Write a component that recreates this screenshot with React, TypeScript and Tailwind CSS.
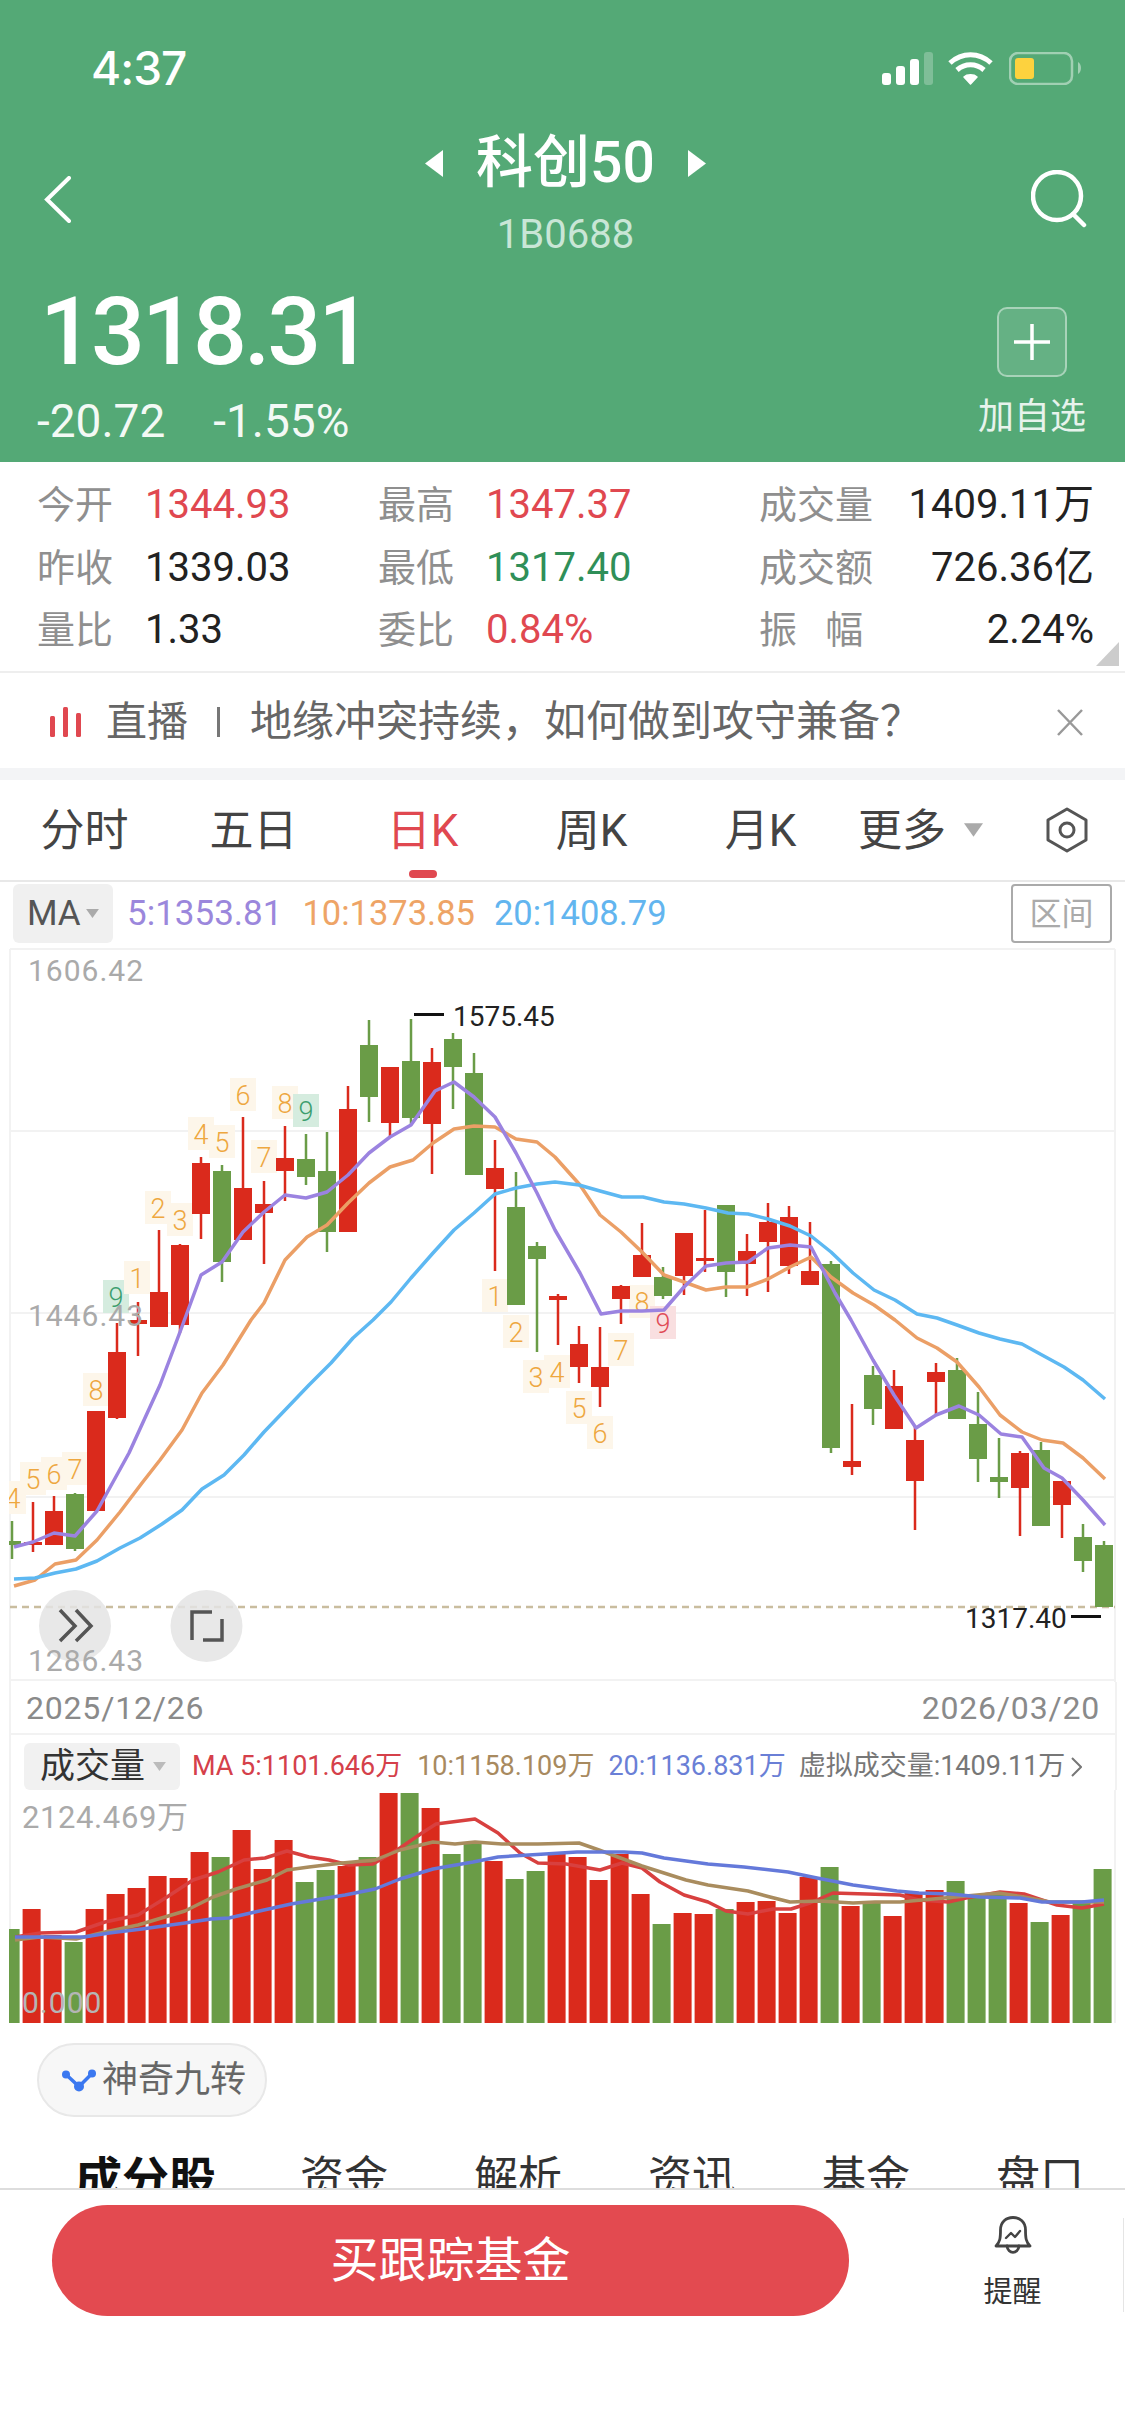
import React from "react";

const FONT = "font-['Roboto','Noto_Sans_CJK_SC',sans-serif]";

const RED = "#da2a1c";
const GREEN = "#6a9c47";

// top, body top, body bottom, low, colour
const candles: [number, number, number, number, "r" | "g"][] = [
	[1521, 1541, 1545, 1559, "g"],
	[1502, 1542, 1545, 1552, "r"],
	[1496, 1511, 1545, 1545, "r"],
	[1493, 1494, 1549, 1551, "g"],
	[1411, 1411, 1511, 1511, "r"],
	[1323, 1352, 1418, 1419, "r"],
	[1302, 1320, 1324, 1356, "r"],
	[1230, 1292, 1327, 1327, "r"],
	[1244, 1245, 1325, 1333, "r"],
	[1157, 1163, 1214, 1239, "r"],
	[1165, 1171, 1262, 1282, "g"],
	[1117, 1188, 1240, 1240, "r"],
	[1181, 1204, 1213, 1264, "r"],
	[1126, 1158, 1171, 1201, "r"],
	[1134, 1159, 1177, 1185, "g"],
	[1132, 1171, 1232, 1252, "g"],
	[1086, 1109, 1232, 1232, "r"],
	[1020, 1045, 1097, 1122, "g"],
	[1067, 1067, 1123, 1137, "r"],
	[1019, 1061, 1118, 1125, "g"],
	[1048, 1062, 1124, 1174, "r"],
	[1033, 1039, 1067, 1109, "g"],
	[1053, 1073, 1175, 1175, "g"],
	[1140, 1168, 1189, 1271, "r"],
	[1172, 1207, 1305, 1305, "g"],
	[1242, 1246, 1259, 1352, "g"],
	[1294, 1296, 1300, 1345, "r"],
	[1326, 1344, 1367, 1383, "r"],
	[1327, 1367, 1387, 1407, "r"],
	[1285, 1286, 1299, 1324, "r"],
	[1223, 1255, 1277, 1277, "r"],
	[1267, 1277, 1296, 1299, "g"],
	[1233, 1233, 1276, 1295, "r"],
	[1210, 1258, 1261, 1272, "r"],
	[1205, 1205, 1272, 1297, "g"],
	[1234, 1251, 1264, 1296, "r"],
	[1203, 1222, 1242, 1292, "r"],
	[1206, 1217, 1266, 1274, "r"],
	[1222, 1271, 1285, 1285, "r"],
	[1261, 1264, 1448, 1453, "g"],
	[1404, 1461, 1467, 1475, "r"],
	[1366, 1375, 1409, 1425, "g"],
	[1370, 1386, 1429, 1429, "r"],
	[1427, 1440, 1481, 1530, "r"],
	[1363, 1372, 1382, 1414, "r"],
	[1358, 1370, 1419, 1419, "g"],
	[1392, 1424, 1459, 1482, "g"],
	[1438, 1477, 1482, 1498, "g"],
	[1451, 1453, 1488, 1536, "r"],
	[1442, 1450, 1526, 1526, "g"],
	[1481, 1481, 1505, 1538, "r"],
	[1524, 1537, 1561, 1572, "g"],
	[1541, 1545, 1607, 1607, "g"],
];

const ma5 =
	"14,1547 33,1542 54,1533 75,1536 97,1511 129,1453 160,1385 180,1332 201,1275 222,1262 243,1232 264,1212 285,1195 306,1198 327,1192 348,1175 369,1153 390,1137 411,1125 435,1091 454,1082 474,1097 495,1117 516,1153 537,1193 555,1230 580,1273 601,1314 621,1311 642,1311 664,1310 684,1287 706,1266 726,1263 748,1262 768,1248 790,1245 811,1247 835,1293 851,1320 873,1360 894,1395 916,1428 936,1415 959,1406 979,1415 1001,1434 1022,1437 1044,1468 1062,1478 1083,1500 1105,1525";
const ma10 =
	"14,1586 35,1580 55,1564 76,1560 97,1540 120,1512 142,1483 160,1460 182,1430 202,1393 223,1365 251,1320 264,1303 285,1260 307,1237 327,1225 348,1203 369,1183 390,1167 413,1160 433,1143 454,1129 474,1126 495,1127 516,1139 537,1142 555,1157 580,1185 600,1215 621,1232 642,1252 664,1275 684,1282 706,1290 726,1287 747,1287 768,1279 790,1267 811,1257 831,1277 853,1293 874,1305 895,1320 917,1338 937,1348 957,1362 979,1387 1000,1415 1022,1432 1042,1440 1063,1443 1083,1458 1105,1479";
const ma20 =
	"14,1579 35,1578 55,1573 76,1569 97,1561 120,1548 140,1538 162,1524 182,1510 202,1489 224,1475 244,1455 264,1432 287,1408 309,1385 331,1363 353,1338 373,1320 391,1302 411,1278 433,1253 454,1230 474,1213 495,1194 516,1188 537,1184 555,1182 579,1185 600,1191 622,1197 643,1197 664,1202 684,1204 706,1208 728,1213 748,1214 768,1219 790,1226 811,1236 831,1252 853,1273 874,1290 895,1300 917,1314 937,1318 957,1325 979,1333 1000,1339 1022,1344 1042,1355 1064,1367 1083,1380 1105,1399";

// digit, x, y, tone
const nineTurn: [string, number, number, "o" | "g" | "r"][] = [
	["4", 13, 1498, "o"],
	["5", 33, 1479, "o"],
	["6", 54, 1474, "o"],
	["7", 75, 1469, "o"],
	["8", 96, 1390, "o"],
	["9", 116, 1297, "g"],
	["1", 137, 1278, "o"],
	["2", 158, 1208, "o"],
	["3", 180, 1220, "o"],
	["4", 201, 1134, "o"],
	["5", 222, 1142, "o"],
	["6", 243, 1095, "o"],
	["7", 264, 1157, "o"],
	["8", 285, 1103, "o"],
	["9", 306, 1111, "g"],
	["1", 495, 1296, "o"],
	["2", 516, 1332, "o"],
	["3", 536, 1377, "o"],
	["4", 557, 1372, "o"],
	["5", 579, 1408, "o"],
	["6", 600, 1433, "o"],
	["7", 621, 1350, "o"],
	["8", 642, 1302, "o"],
	["9", 663, 1323, "r"],
];

const toneBox = { o: "#fdf6ea", g: "#d5ecdf", r: "#f9dfe0" };
const toneText = { o: "#eea73f", g: "#3c9e6e", r: "#e04b56" };

const volumes: [number, "r" | "g"][] = [
	[1929, "g"], [1909, "r"], [1935, "r"], [1942, "g"], [1909, "r"], [1894, "r"], [1888, "r"], [1876, "r"],
	[1878, "r"], [1852, "r"], [1857, "g"], [1830, "r"], [1869, "r"], [1840, "r"], [1882, "g"], [1870, "g"],
	[1866, "r"], [1857, "g"], [1793, "r"], [1793, "g"], [1808, "r"], [1854, "g"], [1844, "g"], [1861, "r"],
	[1879, "g"], [1871, "g"], [1854, "r"], [1857, "r"], [1880, "r"], [1854, "r"], [1894, "r"], [1924, "g"],
	[1913, "r"], [1914, "r"], [1909, "g"], [1902, "r"], [1901, "r"], [1913, "r"], [1877, "r"], [1867, "g"],
	[1906, "r"], [1902, "g"], [1916, "r"], [1893, "r"], [1890, "r"], [1881, "g"], [1897, "g"], [1893, "g"],
	[1903, "r"], [1922, "g"], [1915, "r"], [1903, "g"], [1869, "g"],
];

const volRed =
	"15,1937 40,1933 76,1932 105,1922 138,1915 167,1897 193,1880 218,1872 244,1860 265,1858 287,1851 309,1857 329,1860 349,1865 373,1864 400,1848 422,1833 436,1824 475,1819 498,1833 520,1853 538,1863 566,1864 600,1870 622,1863 642,1868 660,1882 684,1895 708,1902 726,1911 748,1914 773,1909 791,1909 810,1903 833,1893 900,1895 919,1900 948,1902 966,1898 1000,1892 1024,1894 1057,1905 1082,1908 1104,1904";
const volTan =
	"15,1940 40,1937 76,1939 105,1932 138,1925 185,1911 213,1897 236,1889 267,1880 287,1870 309,1867 342,1863 375,1860 400,1850 433,1842 455,1844 475,1842 502,1844 538,1844 579,1843 599,1850 642,1866 686,1880 708,1885 748,1891 770,1897 790,1902 820,1901 853,1903 875,1902 900,1902 955,1897 999,1893 1024,1897 1050,1902 1104,1902";
const volBlue =
	"15,1937 84,1937 109,1933 142,1929 185,1923 211,1919 229,1918 255,1912 291,1904 345,1895 375,1889 400,1879 433,1869 473,1862 498,1857 545,1854 577,1852 624,1852 642,1853 664,1858 686,1861 708,1864 744,1867 788,1872 817,1878 853,1885 897,1891 919,1893 951,1894 980,1897 1020,1898 1042,1902 1082,1902 1104,1900";

function Triangle({ className, fill }: { className: string; fill: string }) {
	return (
		<svg viewBox="0 0 20 14" className={className}>
			<polygon points="0,0 20,0 10,14" fill={fill} />
		</svg>
	);
}

function StatusBar() {
	return (
		<div className="flex h-[110px] items-center justify-between pt-[26px] pl-[91px] pr-[43px]">
			<span className="text-[46px] leading-none font-['Inter',sans-serif] font-medium tracking-[-1px]">4:37</span>
			<div className="flex items-center">
				<svg width="51" height="33" viewBox="0 0 51 33" fill="white">
					<rect x="0" y="21" width="9" height="12" rx="3" />
					<rect x="14" y="14" width="9" height="19" rx="3" />
					<rect x="28" y="7" width="9" height="26" rx="3" />
					<rect x="42" y="0" width="9" height="33" rx="3" opacity="0.25" />
				</svg>
				<svg width="45" height="33" viewBox="0 0 45 33" fill="none" stroke="white" strokeWidth="5" className="ml-[15px]">
					<path d="M2 11 C14 0 31 0 43 11" />
					<path d="M9 18 C17 11 28 11 36 18" />
					<path d="M16 25 C19 22 26 22 29 25 L22.5 32 Z" fill="white" strokeWidth="1.5" strokeLinejoin="round" />
				</svg>
				<svg width="73" height="33" viewBox="0 0 73 33" className="ml-[16px]">
					<rect x="1" y="1" width="62" height="31" rx="8" fill="none" stroke="#ffffff" strokeOpacity="0.45" strokeWidth="2.5" />
					<rect x="6" y="6" width="19" height="21" rx="3" fill="#fdd23e" />
					<path d="M69 10 C73 12 73 20 69 22 Z" fill="#ffffff" fillOpacity="0.45" />
				</svg>
			</div>
		</div>
	);
}

function Header() {
	return (
		<header className="h-[462px] bg-[#54a976] text-white">
			<StatusBar />
			<div className="grid h-[148px] grid-cols-[1fr_auto_1fr] pl-[44px] pr-[38px]">
				<svg width="27" height="47" viewBox="0 0 27 47" fill="none" stroke="white" strokeWidth="4" strokeLinecap="round" className="mt-[30px] self-center">
					<path d="M25 2 L3 23.5 L25 45" />
				</svg>
				<div className="flex flex-col items-center">
					<div className="flex h-[106px] items-center gap-[33px]">
						<svg width="18" height="27" viewBox="0 0 18 27" fill="white">
							<polygon points="18,0 18,27 0,13.5" />
						</svg>
						<span className="text-[57px] font-medium">科创50</span>
						<svg width="18" height="27" viewBox="0 0 18 27" fill="white">
							<polygon points="0,0 0,27 18,13.5" />
						</svg>
					</div>
					<div className="h-[38px] text-[40px] leading-[38px] text-[#c9e6d6]">1B0688</div>
				</div>
				<svg width="56" height="58" viewBox="0 0 56 58" fill="none" stroke="white" strokeWidth="4.5" strokeLinecap="round" className="mt-[30px] self-center justify-self-end">
					<circle cx="26" cy="26" r="24" />
					<path d="M42 44 L53 55" />
				</svg>
			</div>
			<div className="flex justify-between pl-[40px] pr-[40px]">
				<div>
					<div className="flex h-[146px] items-center text-[95px] font-medium tracking-[-3px] leading-none">1318.31</div>
					<div className="-ml-[3px] flex h-[34px] items-center gap-[48px] text-[46px] leading-none text-[#f3f9f5]">
						<span>-20.72</span>
						<span>-1.55%</span>
					</div>
				</div>
				<div className="flex w-[106px] flex-col items-center pt-[49px]">
					<div className="flex h-[70px] w-[70px] items-center justify-center rounded-[10px] border-2 border-[#ffffff70] bg-[#ffffff1a]">
						<svg width="36" height="36" viewBox="0 0 36 36" stroke="white" strokeWidth="3.5">
							<path d="M18 0 V36 M0 18 H36" />
						</svg>
					</div>
					<div className="mt-[23px] text-[36px] leading-[34px] whitespace-nowrap text-[#e7f3ec]">加自选</div>
				</div>
			</div>
		</header>
	);
}

function Stat({ label, value, tone, wide }: { label: string; value: string; tone: string; wide?: boolean }) {
	return (
		<div className={`flex items-center leading-none ${wide ? "justify-between" : ""}`}>
			<span className={`text-[38px] text-[#8f8f8f] ${wide ? "" : "w-[108px]"} whitespace-pre`}>{label}</span>
			<span className={`text-[40px] ${tone} whitespace-nowrap`}>{value}</span>
		</div>
	);
}

function Stats() {
	return (
		<section className="relative h-[211px] border-b-2 border-[#eeeeee] pt-[12px] pl-[37px] pr-[31px]">
			<div className="grid grid-cols-[341px_381px_1fr] auto-rows-[62.5px]">
				<Stat label="今开" value="1344.93" tone="text-[#e04850]" />
				<Stat label="最高" value="1347.37" tone="text-[#e04850]" />
				<Stat label="成交量" value="1409.11万" tone="text-[#222222]" wide />
				<Stat label="昨收" value="1339.03" tone="text-[#222222]" />
				<Stat label="最低" value="1317.40" tone="text-[#2f8f58]" />
				<Stat label="成交额" value="726.36亿" tone="text-[#222222]" wide />
				<Stat label="量比" value="1.33" tone="text-[#222222]" />
				<Stat label="委比" value="0.84%" tone="text-[#e04850]" />
				<Stat label="振   幅" value="2.24%" tone="text-[#222222]" wide />
			</div>
			<svg width="23" height="24" viewBox="0 0 23 24" className="absolute right-[6px] bottom-[5px]">
				<polygon points="23,0 23,24 0,24" fill="#cccccc" />
			</svg>
		</section>
	);
}

function LiveBar() {
	return (
		<section className="flex h-[95px] items-center pt-[3px] pl-[50px] pr-[42px] text-[41px] leading-none text-[#666666]">
			<svg width="31" height="30" viewBox="0 0 31 30" fill="#e04850">
				<rect x="0" y="9" width="5" height="21" rx="1.5" />
				<rect x="13" y="0" width="5" height="30" rx="1.5" />
				<rect x="26" y="6" width="5" height="24" rx="1.5" />
			</svg>
			<span className="ml-[25px]">直播</span>
			<span className="ml-[29px] h-[30px] w-[3px] bg-[#777777]" />
			<span className="ml-[30px] text-[42px] whitespace-nowrap">{"地缘冲突持续\uFF0C如何做到攻守兼备\uFF1F"}</span>
			<svg width="26" height="27" viewBox="0 0 26 27" stroke="#999999" strokeWidth="2.5" className="ml-auto">
				<path d="M1 1 L25 26 M25 1 L1 26" />
			</svg>
		</section>
	);
}

function PeriodTabs() {
	const tabs = ["分时", "五日", "日K", "周K", "月K"];
	return (
		<nav className="flex h-[102px] items-center border-b-2 border-[#e8e8e8] text-[44px] leading-none text-[#444444]">
			{tabs.map((tab, i) => (
				<div
					key={tab}
					className={`relative flex h-full w-[169px] items-center justify-center pt-[2px] ${i === 2 ? "text-[#e04850]" : ""}`}
				>
					{tab}
					{i === 2 && <span className="absolute bottom-[2px] h-[8px] w-[28px] rounded-full bg-[#e04850]" />}
				</div>
			))}
			<span className="ml-[13px] pt-[2px]">更多</span>
			<Triangle className="ml-[18px] h-[14px] w-[19px]" fill="#aaaaaa" />
			<svg width="44" height="46" viewBox="0 0 44 46" fill="none" stroke="#555555" strokeWidth="3" className="ml-[62px]">
				<path d="M22 2 L41 13 V33 L22 44 L3 33 V13 Z" strokeLinejoin="round" />
				<circle cx="22" cy="23" r="7" />
			</svg>
		</nav>
	);
}

function MaRow() {
	return (
		<div className="flex h-[65px] items-start pt-[2px] pl-[13px] pr-[13px] text-[35px] leading-none">
			<div className="flex h-[59px] w-[100px] items-center rounded-[6px] bg-[#f0f0f0] pl-[14px] text-[#555555]">
				MA
				<Triangle className="ml-[5px] h-[9px] w-[13px]" fill="#aaaaaa" />
			</div>
			<div className="flex h-[59px] items-center pl-[14px] text-[#9b87dc]">5:1353.81</div>
			<div className="flex h-[59px] items-center pl-[20px] text-[34.5px] text-[#eea466]">10:1373.85</div>
			<div className="flex h-[59px] items-center pl-[19px] text-[34.5px] text-[#62b5ef]">20:1408.79</div>
			<div className="ml-auto flex h-[59px] w-[101px] items-center justify-center rounded-[4px] border-2 border-[#aaaaaa] text-[32px] text-[#aaaaaa]">
				区间
			</div>
		</div>
	);
}

function PriceChart() {
	return (
		<svg width="1125" height="735" viewBox="0 947 1125 735" className="block" fontFamily="Roboto, sans-serif">
			<defs>
				<clipPath id="price-clip">
					<rect x="9" y="947" width="1107" height="735" />
				</clipPath>
			</defs>
			<g stroke="#f2f2f2" strokeWidth="2">
				<path d="M10 949 H1115 M10 1131 H1115 M10 1313 H1115 M10 1497 H1115 M10 1680 H1115 M10 949 V1682 M1115 949 V1682" fill="none" />
			</g>
			<line x1="10" x2="1115" y1="1607" y2="1607" stroke="#c9bd9f" strokeWidth="2.5" strokeDasharray="7 5" />
			<g clipPath="url(#price-clip)">
				{nineTurn.map(([digit, x, y, tone], i) => (
					<g key={i}>
						<rect x={x - 13} y={y - 17} width="26" height="33" fill={toneBox[tone]} />
						<text x={x} y={y + 10} textAnchor="middle" fontSize="27" fontWeight="300" fill={toneText[tone]}>
							{digit}
						</text>
					</g>
				))}
				{candles.map(([top, bodyTop, bodyBottom, low, tone], i) => {
					const x = 12 + 21 * i;
					const fill = tone === "r" ? RED : GREEN;
					return (
						<g key={i} fill={fill}>
							<rect x={x - 1.25} y={top} width="2.5" height={low - top} />
							<rect x={x - 9} y={bodyTop} width="18" height={bodyBottom - bodyTop} />
						</g>
					);
				})}
				<g fill="none" strokeWidth="3.5" strokeLinejoin="round">
					<polyline points={ma10} stroke="#eb9f66" />
					<polyline points={ma20} stroke="#5db8f2" />
					<polyline points={ma5} stroke="#9b83e0" />
				</g>
			</g>
			<circle cx="75" cy="1626" r="36" fill="#e4e4e4" fillOpacity="0.85" />
			<circle cx="206.5" cy="1626" r="36" fill="#e4e4e4" fillOpacity="0.85" />
			<path d="M60 1610 L75 1626 L60 1641 M76 1610 L91 1626 L76 1641" fill="none" stroke="#555555" strokeWidth="3.5" />
			<path d="M192 1640 V1612 H212 M222 1619 V1640 H203" fill="none" stroke="#555555" strokeWidth="3.5" />
			<g fontSize="30" fill="#aaaaaa" letterSpacing="1">
				<text x="28" y="981">1606.42</text>
				<text x="28" y="1326">1446.43</text>
				<text x="28" y="1671">1286.43</text>
			</g>
			<rect x="414" y="1013" width="30" height="3" fill="#111111" />
			<text x="453" y="1026" fontSize="28" fill="#222222">1575.45</text>
			<text x="965" y="1628" fontSize="28" fill="#222222">1317.40</text>
			<rect x="1071" y="1615" width="30" height="3" fill="#111111" />
		</svg>
	);
}

function VolumeChart() {
	return (
		<svg width="1125" height="240" viewBox="0 1790 1125 240" className="block" fontFamily="Roboto, 'Noto Sans CJK SC', sans-serif">
			<defs>
				<clipPath id="vol-clip">
					<rect x="9" y="1790" width="1107" height="240" />
				</clipPath>
			</defs>
			<path d="M10 1790 V2023 M1115 1790 V2023" stroke="#f2f2f2" strokeWidth="2" />
			<g clipPath="url(#vol-clip)">
				{volumes.map(([top, tone], i) => (
					<rect key={i} x={1.6 + 21 * i} y={top} width="18" height={2023 - top} fill={tone === "r" ? RED : GREEN} />
				))}
			</g>
			<g fill="none" strokeWidth="3.5" strokeLinejoin="round">
				<polyline points={volRed} stroke="#d8403f" />
				<polyline points={volTan} stroke="#a98c5e" />
				<polyline points={volBlue} stroke="#6479da" />
			</g>
			<text x="22" y="1828" fontSize="31" letterSpacing="0.6" fill="#aaaaaa">2124.469万</text>
			<text x="22" y="2013" fontSize="30" letterSpacing="1" fill="#b5b5b5">0.000</text>
		</svg>
	);
}

function VolumeHeader() {
	return (
		<div className="ml-[9px] mr-[8px] flex h-[57px] items-center border-x-2 border-t-2 border-[#f2f2f2] pl-[13px] text-[27px] leading-none whitespace-nowrap">
			<div className="mt-[8px] flex h-[47px] w-[156px] items-center rounded-[6px] bg-[#f1f1f1] pl-[16px] text-[35px] text-[#333333]">
				成交量
				<Triangle className="ml-[8px] h-[9px] w-[13px]" fill="#bbbbbb" />
			</div>
			<div className="mt-[8px] flex items-center">
				<span className="ml-[12px] text-[#d5404a]">MA 5:1101.646万</span>
				<span className="ml-[15px] text-[#a88a5f]">10:1158.109万</span>
				<span className="ml-[14px] text-[#6a7fd6]">20:1136.831万</span>
				<span className="ml-[13px] text-[#777777]">虚拟成交量:1409.11万</span>
				<svg width="11" height="20" viewBox="0 0 11 20" fill="none" stroke="#777777" strokeWidth="2" className="ml-[6px]">
					<path d="M1 1 L10 10 L1 19" />
				</svg>
			</div>
		</div>
	);
}

function NineTurnChip() {
	return (
		<div className="h-[100px] pt-[13px] pl-[37px]">
			<div className="flex h-[74px] w-[230px] items-center rounded-full border-2 border-[#e8e8e8] bg-[#f7f7f7] pl-[22px] text-[36px] text-[#666666]">
				<svg width="36" height="23" viewBox="0 0 36 23" fill="#3b78f0" stroke="#3b78f0">
					<path d="M5 5.5 L18 17.5 L31 4.5" fill="none" strokeWidth="3.5" />
					<circle cx="5" cy="5.5" r="4" strokeWidth="0" />
					<circle cx="31" cy="4.5" r="4" strokeWidth="0" />
					<circle cx="18" cy="17.5" r="5" strokeWidth="0" />
				</svg>
				<span className="ml-[5px] whitespace-nowrap">神奇九转</span>
			</div>
		</div>
	);
}

function SectionTabs() {
	return (
		<div className="flex h-[58px] gap-[86px] overflow-hidden pt-[26px] pl-[75px] text-[44px] leading-none whitespace-nowrap text-[#333333]">
			<span className="mr-[-2px] text-[47px] font-bold text-[#111111]">成分股</span>
			<span>资金</span>
			<span>解析</span>
			<span>资讯</span>
			<span>基金</span>
			<span>盘口</span>
		</div>
	);
}

function Footer() {
	return (
		<footer className="relative h-[248px] border-t-2 border-[#dddddd] bg-white">
			<div className="flex items-start pt-[15px] pl-[52px]">
				<button className="flex h-[111px] w-[797px] items-center justify-center rounded-full bg-[#e34a50] text-[48px] leading-none text-white">
					买跟踪基金
				</button>
				<div className="ml-[134px] flex w-[59px] flex-col items-center pt-[11px]">
					<svg width="38" height="39" viewBox="0 0 38 39" fill="none" stroke="#444444" strokeWidth="2.8" strokeLinejoin="round" strokeLinecap="round">
						<path d="M2 30 C6 26 6.5 22 6.5 14 C6.5 6 12 1.5 19 1.5 C26 1.5 31.5 6 31.5 14 C31.5 22 32 26 36 30 Z" />
						<path d="M13 30 C14 38.5 24 38.5 25 30" />
						<path d="M12 22 L17 17 L21 21 L26 15" strokeWidth="2.4" />
					</svg>
					<span className="mt-[23px] text-[29px] leading-none whitespace-nowrap text-[#333333]">提醒</span>
				</div>
			</div>
			<span className="absolute top-[28px] right-[1px] h-[94px] w-[1px] bg-[#e5e5e5]" />
		</footer>
	);
}

export default function App() {
	return (
		<div className={`h-[2436px] w-[1125px] overflow-hidden bg-white ${FONT}`}>
			<Header />
			<Stats />
			<LiveBar />
			<div className="h-[12px] bg-[#f3f4f6]" />
			<PeriodTabs />
			<MaRow />
			<PriceChart />
			<div className="ml-[9px] mr-[8px] flex h-[51px] items-center justify-between border-x-2 border-[#f2f2f2] px-[15px] text-[32px] leading-none tracking-[0.8px] text-[#8a8a8a]">
				<span>2025/12/26</span>
				<span>2026/03/20</span>
			</div>
			<VolumeHeader />
			<VolumeChart />
			<NineTurnChip />
			<SectionTabs />
			<Footer />
		</div>
	);
}
